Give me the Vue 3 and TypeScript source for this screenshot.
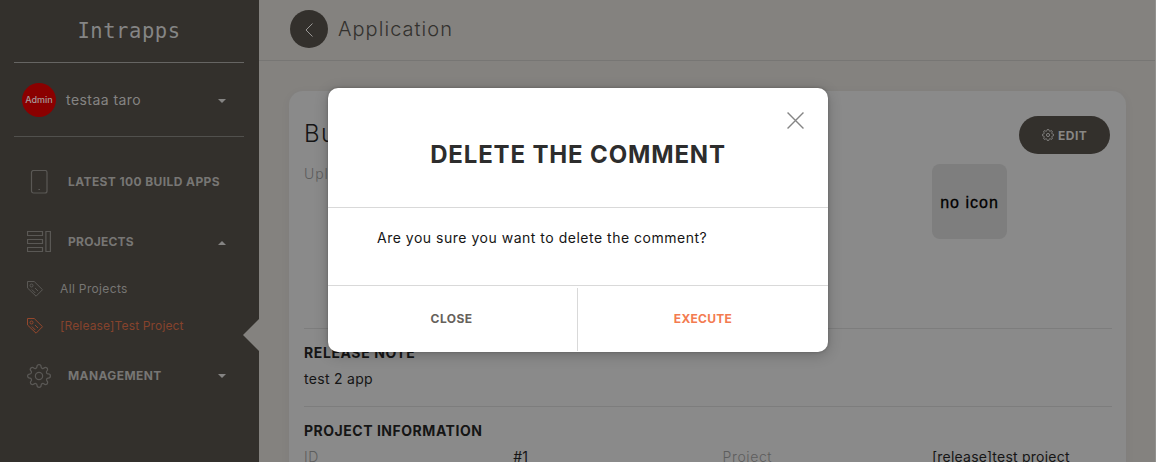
<script setup lang="ts">
interface SubItem { label: string; active: boolean }
const projects: SubItem[] = [
  { label: 'All Projects', active: false },
  { label: '[Release]Test Project', active: true },
]
const gearPath =
  'M19.400 15a1.650 1.650 0 0 0 .33 1.820l.06.06a2 2 0 1 1-2.830 2.830l-.06-.06a1.650 1.650 0 0 0-1.820-.33 1.650 1.650 0 0 0-1 1.510V21a2 2 0 0 1-4 0v-.09A1.650 1.650 0 0 0 9 19.400a1.650 1.650 0 0 0-1.820.33l-.06.06a2 2 0 1 1-2.830-2.830l.06-.06a1.650 1.650 0 0 0 .33-1.820 1.650 1.650 0 0 0-1.510-1H3a2 2 0 0 1 0-4h.09A1.650 1.650 0 0 0 4.600 9a1.650 1.650 0 0 0-.33-1.820l-.06-.06a2 2 0 1 1 2.830-2.830l.06.06a1.650 1.650 0 0 0 1.820.33H9a1.650 1.650 0 0 0 1-1.510V3a2 2 0 0 1 4 0v.09a1.650 1.650 0 0 0 1 1.510 1.650 1.650 0 0 0 1.820-.33l.06-.06a2 2 0 1 1 2.830 2.830l-.06.06a1.650 1.650 0 0 0-.33 1.820V9a1.650 1.650 0 0 0 1.510 1H21a2 2 0 0 1 0 4h-.09a1.650 1.650 0 0 0-1.510 1z'
</script>

<template>
  <div class="app">
    <aside class="sidebar">
      <div class="brand">Intrapps</div>
      <div class="user">
        <span class="avatar">Admin</span>
        <span class="user-name">testaa taro</span>
        <i class="caret"></i>
      </div>
      <nav class="menu">
        <div class="item">
          <svg class="icon" viewBox="0 0 24 24">
            <rect x="4.500" y=".5" width="15.500" height="22.500" rx="2" />
            <path d="M11.400 19.500h1.600" />
          </svg>
          <span class="latest">LATEST 100 BUILD APPS</span>
        </div>
        <div class="item">
          <svg class="icon" viewBox="0 0 24 24">
            <path d="M.5 1.500h15v4h-15zM.5 9.500h15v4h-15zM.5 17.500h15v4h-15zM18.900 1.500h4.500v20h-4.500z" />
          </svg>
          <span class="projects">PROJECTS</span>
          <i class="caret up"></i>
        </div>
        <div class="sub">
          <div v-for="p in projects" :key="p.label" class="sub-item" :class="{ active: p.active }">
            <svg class="tag" viewBox="0 0 18 18">
              <path d="M1.500 1.500h6.700l8.300 8.200-6.400 6.500L1.500 8z" />
              <circle cx="5.500" cy="5.500" r="1.500" />
              <path d="M5.800 9.500l3.500 3.500M9 8l3 3" />
            </svg>
            <span>{{ p.label }}</span>
          </div>
        </div>
        <div class="item">
          <svg class="icon" viewBox="0.4 0.4 23.200 23.200">
            <path :d="gearPath" stroke-linejoin="round" />
            <circle cx="12" cy="12" r="3.500" />
          </svg>
          <span>MANAGEMENT</span>
          <i class="caret"></i>
        </div>
      </nav>
      <i class="pointer"></i>
    </aside>

    <main class="main">
      <header class="topbar">
        <span class="back">
          <svg viewBox="0 0 10 16"><path d="M8.500 1.500L2 8l6.500 6.500" /></svg>
        </span>
        <h1>Application</h1>
      </header>
      <section class="card">
        <div class="summary">
          <div>
            <h2>Build</h2>
            <p class="uploaded">Uploaded</p>
          </div>
          <div class="side">
            <span class="edit">
              <svg viewBox="0.4 0.4 23.200 23.200">
                <path :d="gearPath" />
                <circle cx="12" cy="12" r="3" />
              </svg>
              EDIT
            </span>
            <div class="no-icon">no icon</div>
          </div>
        </div>
        <div class="note">
          <h3 class="release">RELEASE NOTE</h3>
          <p>test 2 app</p>
        </div>
        <div class="info">
          <h3>PROJECT INFORMATION</h3>
          <div class="grid">
            <span class="key">ID</span><span>#1</span>
            <span class="key">Project</span><span class="val">[release]test project</span>
          </div>
        </div>
      </section>
    </main>

    <div class="overlay">
      <div class="dialog">
        <div class="dialog-head">
          <svg class="close-x" viewBox="0 0 16 16"><path d="M.5.5l15 15M15.500.5l-15 15" /></svg>
          <h2>DELETE THE COMMENT</h2>
        </div>
        <p class="dialog-body">Are you sure you want to delete the comment?</p>
        <div class="dialog-actions">
          <button class="cancel">CLOSE</button>
          <button class="execute">EXECUTE</button>
        </div>
      </div>
    </div>
  </div>
</template>

<style scoped>
.app {
  position: relative;
  display: flex;
  width: 1156px;
  height: 462px;
  overflow: hidden;
  background: #84827f;
  font-family: Inter, "Liberation Sans", sans-serif;
  font-size: 14px;
  color: #151515;
}
h1, h2, h3, p { margin: 0; }
svg { fill: none; stroke: currentColor; flex: none; display: block; }
.sidebar {
  position: relative;
  flex: none;
  box-sizing: border-box;
  width: 259px;
  height: 462px;
  padding: 0 15px 0 14px;
  background: #33302c;
  color: #777674;
}
.brand {
  height: 62px;
  line-height: 63px;
  border-bottom: 1px solid #666563;
  text-align: center;
  font-family: "DejaVu Sans Mono", monospace;
  font-size: 20.5px;
  letter-spacing: 0.55px;
  color: #858585;
}
.user {
  display: flex;
  align-items: center;
  height: 73px;
  padding: 0 18px 0 8px;
  border-bottom: 1px solid #51504d;
  color: #858483;
}
.avatar {
  width: 34px;
  height: 34px;
  margin-right: 10px;
  border-radius: 50%;
  background: #8a0000;
  color: #a89c9c;
  font-size: 9px;
  font-weight: 500;
  line-height: 34px;
  text-align: center;
}
.user-name { letter-spacing: 0.45px; }
.caret {
  width: 0;
  height: 0;
  margin-left: auto;
  border: 4px solid transparent;
  border-top-color: #858483;
  border-bottom: 0;
}
.caret.up {
  border-top: 0;
  border-bottom: 4px solid #858483;
  margin-top: 3px;
}
.user .caret, .item .caret:not(.up) { margin-top: 2px; }
.menu { padding-top: 14px; }
.item {
  display: flex;
  align-items: center;
  height: 60px;
  padding: 0 18px 0 13px;
  font-size: 12px;
  font-weight: 700;
  letter-spacing: 0.4px;
}
.icon { width: 24px; height: 24px; margin: 2px 17px 0 0; color: #5a5855; stroke-width: 1.200; }
.projects { letter-spacing: 0.25px; }
.sub { margin-top: -1px; padding-bottom: 1px; }
.sub-item {
  display: flex;
  align-items: center;
  height: 37px;
  padding-left: 12px;
  font-size: 12px;
  letter-spacing: 0.35px;
}
.sub-item.active { color: #86432c; letter-spacing: 0.15px; }
.tag { width: 18px; height: 18px; margin-right: 16px; color: #5a5855; }
.active .tag { color: #94472c; }
.pointer {
  position: absolute;
  right: 0;
  top: 319px;
  border: 16px solid transparent;
  border-right-color: #84827f;
  border-left: 0;
}
.main { flex: 1; min-width: 0; box-sizing: border-box; border-right: 1px solid #92918e; }
.topbar {
  display: flex;
  align-items: center;
  box-sizing: border-box;
  height: 61px;
  padding: 0 0 2px 31px;
  border-bottom: 1px solid #777674;
}
.back {
  display: flex;
  align-items: center;
  justify-content: center;
  width: 38px;
  height: 38px;
  margin-right: 10px;
  border-radius: 50%;
  background: #33302c;
  color: #9a9896;
}
.back svg { width: 10px; height: 16px; margin-top: 1px; }
h1 { font-size: 20px; font-weight: 300; letter-spacing: 1.05px; color: #33312e; }
.card {
  box-sizing: border-box;
  width: 837px;
  height: 420px;
  margin: 30px 0 0 30px;
  padding: 0 14px 0 15px;
  border-radius: 14px;
  background: #8a8a8a;
  box-shadow: 0 2px 12px rgba(0, 0, 0, 0.035);
}
.summary {
  display: flex;
  justify-content: space-between;
  box-sizing: border-box;
  height: 238px;
  padding-top: 25px;
  border-bottom: 1px solid #7d7d7d;
}
.summary h2 { padding-top: 2px; font-size: 24px; line-height: 32px; font-weight: 300; letter-spacing: 1.300px; }
.uploaded { margin-top: 14px; line-height: 20px; color: #5d5d5d; font-weight: 300; letter-spacing: 0.9px; }
.side { width: 180px; padding-right: 0; }
.edit {
  display: flex;
  align-items: center;
  box-sizing: border-box;
  width: 91px;
  height: 38px;
  margin: 0 2px 0 auto;
  padding-left: 23px;
  border-radius: 19px;
  background: #33302c;
  color: #888785;
  font-size: 12px;
  font-weight: 700;
  letter-spacing: 0.5px;
}
.edit svg { width: 12px; height: 12px; margin: -1px 4px 0 0; stroke-width: 1.800; }
.no-icon {
  width: 75px;
  height: 75px;
  margin-top: 10px;
  border-radius: 8px;
  background: #7e7e7e;
  color: #000;
  font: 16px/77px "Liberation Sans", sans-serif;
  letter-spacing: 1px;
  text-align: center;
  -webkit-text-stroke: 0.3px #000;
}
h3 { font-size: 14px; line-height: 20px; font-weight: 700; letter-spacing: 0.52px; }
.release { letter-spacing: 0.6px; }
.note { box-sizing: border-box; height: 78px; padding-top: 14px; border-bottom: 1px solid #7d7d7d; }
.note p { margin-top: 6px; line-height: 20px; letter-spacing: 0.3px; }
.info { padding-top: 14px; }
.grid { display: grid; grid-template-columns: repeat(4, 209.3px); margin-top: 6px; line-height: 20px; }
.key { color: #5d5d5d; font-weight: 300; letter-spacing: 0.6px; }
.val { letter-spacing: 0.23px; }
.overlay {
  position: absolute;
  inset: 0;
  display: flex;
  justify-content: center;
  align-items: flex-start;
  padding-top: 88px;
}
.dialog {
  display: flex;
  flex-direction: column;
  width: 500px;
  height: 264px;
  border-radius: 10px;
  background: #fff;
  box-shadow: 0 3px 14px rgba(0, 0, 0, 0.22), 0 0 3px rgba(0, 0, 0, 0.25);
}
.dialog-head {
  position: relative;
  box-sizing: border-box;
  height: 120px;
  padding-top: 51px;
  border-bottom: 1px solid #d9d9d9;
  text-align: center;
}
.dialog-head h2 { font-size: 24px; line-height: 32px; font-weight: 700; letter-spacing: 0.85px; color: #2d2d2d; }
.close-x { position: absolute; top: 24px; right: 24px; width: 17px; height: 17px; color: #858585; stroke-width: 1.3; }
.dialog-body {
  box-sizing: border-box;
  height: 78px;
  padding: 20px 49px;
  border-bottom: 1px solid #d9d9d9;
  line-height: 20px;
  letter-spacing: 0.51px;
}
.dialog-actions { display: flex; height: 63px; margin-top: 2px; }
button {
  flex: 1;
  padding: 0 0 3px;
  border: 0;
  background: none;
  font: 700 12px Inter, sans-serif;
  letter-spacing: 0.42px;
}
.cancel { flex: none; width: 250px; border-right: 1px solid #d9d9d9; color: #66615b; padding-right: 2px; }
.execute { color: #f37b50; letter-spacing: 0.28px; }
</style>
